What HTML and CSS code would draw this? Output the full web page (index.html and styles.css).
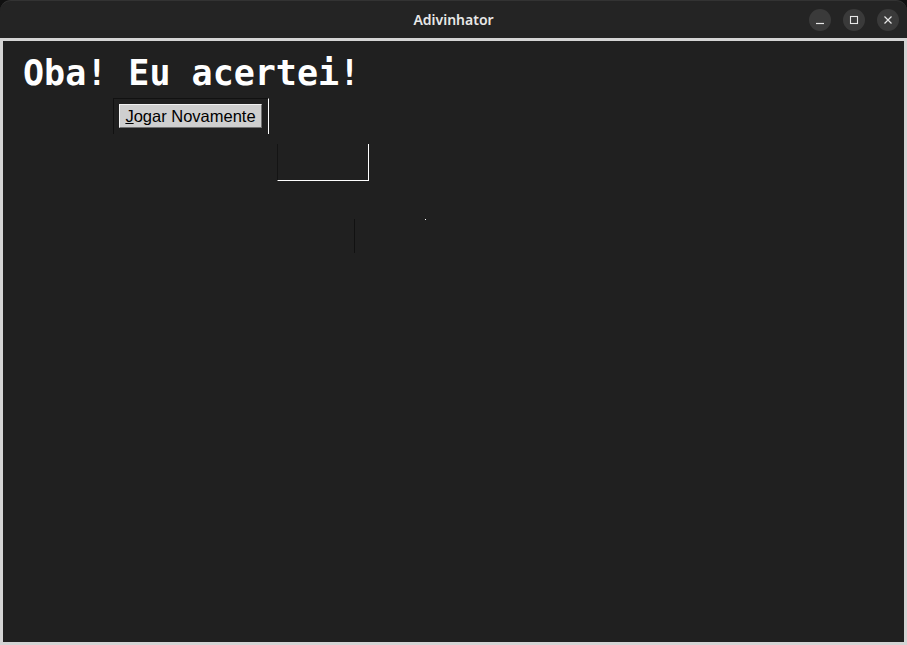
FILE: index.html
```html
<!DOCTYPE html>
<html lang="pt">
<head>
<meta charset="utf-8">
<title>Adivinhator</title>
<link rel="stylesheet" href="styles.css">
</head>
<body>
<div class="window">
  <div class="titlebar-wrap">
    <header class="titlebar">
      <span class="title">Adivinhator</span>
      <div class="controls">
        <span class="ctl"><svg width="10" height="10" viewBox="0 0 10 10"><path d="M1 8.5h8" stroke="#e6e6e6" stroke-width="1.2"/></svg></span>
        <span class="ctl"><svg width="10" height="10" viewBox="0 0 10 10"><rect x="1.5" y="1.5" width="7" height="7" fill="none" stroke="#e6e6e6" stroke-width="1.1"/></svg></span>
        <span class="ctl"><svg width="10" height="10" viewBox="0 0 10 10"><path d="M1.5 1.5l7 7M8.5 1.5l-7 7" stroke="#e6e6e6" stroke-width="1.2"/></svg></span>
      </div>
    </header>
  </div>
  <main class="content">
    <h1 class="heading">Oba! Eu acertei!</h1>
    <div class="frame-a">
      <button class="btn" type="button"><u>J</u>ogar Novamente</button>
    </div>
    <div class="frame-b"></div>
    <div class="row-c">
      <span class="vline"></span>
      <span class="dot"></span>
    </div>
  </main>
</div>
</body>
</html>
```

FILE: styles.css
```css
html, body {
  margin: 0;
  padding: 0;
}
body {
  background: #d4d4d4;
  width: 907px;
  height: 645px;
  overflow: hidden;
}
.window {
  display: flex;
  flex-direction: column;
  height: 645px;
}
.titlebar-wrap {
  background: #101010;
}
.titlebar {
  position: relative;
  height: 38px;
  background: #242424;
  border-radius: 11px 11px 0 0;
  border-top: 1px solid #333;
  box-sizing: border-box;
  display: flex;
  align-items: center;
  justify-content: center;
}
.title {
  font-family: "Noto Sans", "DejaVu Sans", sans-serif;
  font-weight: 600;
  font-size: 14px;
  color: #e8e8e8;
}
.controls {
  position: absolute;
  right: 8px;
  top: 8px;
  display: flex;
  gap: 12px;
}
.ctl {
  width: 22px;
  height: 22px;
  border-radius: 50%;
  background: #3a3a3a;
  display: flex;
  align-items: center;
  justify-content: center;
}
.content {
  margin: 3px 3px 3px 3px;
  height: 601px;
  background: #202020;
  box-sizing: border-box;
  padding-top: 12px;
  display: flex;
  flex-direction: column;
  align-items: flex-start;
}
.heading {
  margin: 0 0 5px 20px;
  font-family: "DejaVu Sans Mono", monospace;
  font-weight: 700;
  font-size: 35px;
  line-height: 40px;
  color: #ffffff;
}
.frame-a {
  margin-left: 110px;
  width: 156px;
  height: 36px;
  box-sizing: border-box;
  border-top: 1px solid #111111;
  border-left: 1px solid #111111;
  border-right: 1px solid #ffffff;
  padding: 5px 0 0 5px;
}
.btn {
  margin: 0;
  width: 143px;
  height: 24px;
  padding: 0;
  box-sizing: border-box;
  background: #cfcfcf;
  border: 1px solid;
  border-color: #f2f2f2 #707070 #707070 #f2f2f2;
  font-family: "Liberation Sans", Arial, sans-serif;
  font-size: 16.5px;
  color: #000000;
  line-height: 20px;
  text-align: center;
}
.frame-b {
  margin: 10px 0 0 274px;
  width: 92px;
  height: 37px;
  box-sizing: border-box;
  border-left: 1px solid #141414;
  border-right: 1px solid #ffffff;
  border-bottom: 1px solid #ffffff;
}
.row-c {
  margin: 38px 0 0 351px;
  display: flex;
  align-items: flex-start;
}
.vline {
  width: 1px;
  height: 34px;
  background: #111111;
}
.dot {
  margin-left: 70px;
  width: 1px;
  height: 1px;
  background: #ffffff;
}
```
